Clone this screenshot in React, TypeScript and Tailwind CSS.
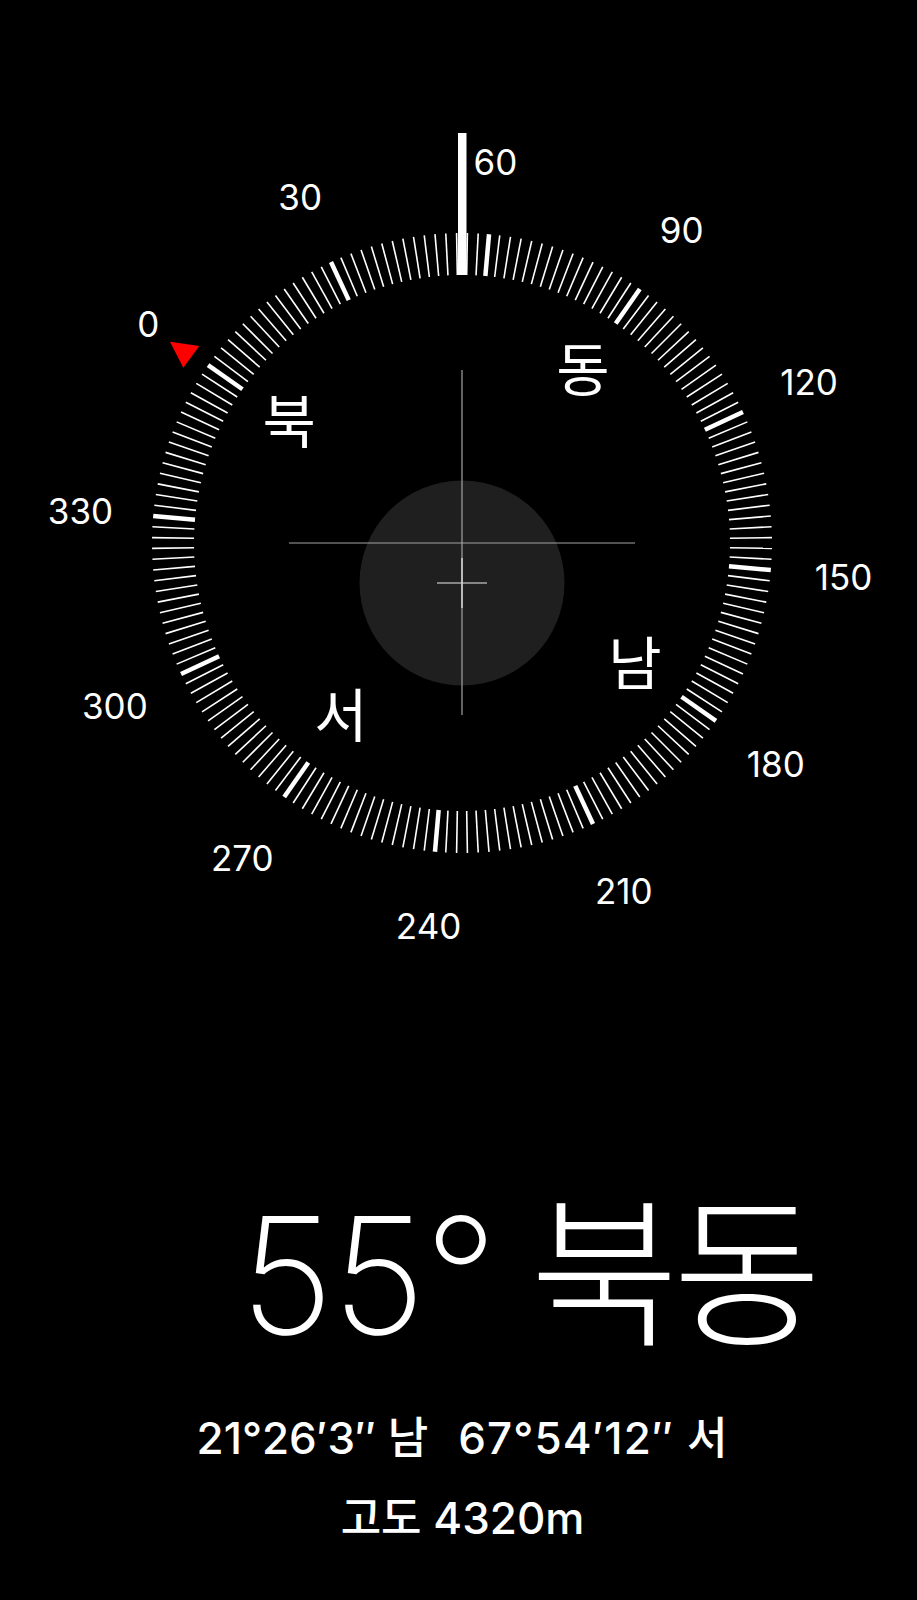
import React from 'react'

const CX = 462
const CY = 543
const HEADING = 55

// screen angle (deg, clockwise from up) -> point
const polar = (deg: number, r: number) => {
  const a = (deg * Math.PI) / 180
  return { x: CX + r * Math.sin(a), y: CY - r * Math.cos(a) }
}

const ticks = Array.from({ length: 180 }, (_, i) => i * 2)
const degreeLabels = Array.from({ length: 12 }, (_, i) => i * 30)
const cardinals: [string, number][] = [
  ['북', 0],
  ['동', 90],
  ['남', 180],
  ['서', 270],
]

function Dial() {
  return (
    <svg width={917} height={1000} viewBox="0 0 917 1000" className="block">
      {/* tick ring */}
      {ticks.map((v) => {
        const a = v - HEADING
        const p1 = polar(a, 268)
        const p2 = polar(a, 310)
        const bold = v % 30 === 0
        return (
          <line
            key={v}
            x1={p1.x}
            y1={p1.y}
            x2={p2.x}
            y2={p2.y}
            stroke="#fff"
            strokeWidth={bold ? 4.5 : 1.6}
          />
        )
      })}

      {/* heading marker */}
      <rect x={CX - 4} y={133} width={8.5} height={142} fill="#fff" />

      {/* north pointer */}
      <polygon points="170,341.7 199.3,346 183.3,367.7" fill="#ff0000" />

      {degreeLabels.map((v) => {
        const p = polar(v - HEADING, 383)
        return (
          <text key={v} x={p.x} y={p.y + 14} textAnchor="middle" fontSize={35} fill="#fff">
            {v}
          </text>
        )
      })}

      {cardinals.map(([label, v]) => {
        const p = polar(v - HEADING, 211)
        return (
          <text key={label} x={p.x} y={p.y + 21} textAnchor="middle" fontSize={58} fill="#fff">
            {label}
          </text>
        )
      })}

      {/* level bubble */}
      <circle cx={CX} cy={583} r={102.5} fill="#1f1f1f" />

      {/* crosshair */}
      <line x1={289} y1={CY} x2={635} y2={CY} stroke="#a3a3a3" strokeWidth={1.2} />
      <line x1={CX} y1={370} x2={CX} y2={715} stroke="#a3a3a3" strokeWidth={1.2} />
      <line x1={CX - 25} y1={583} x2={CX + 25} y2={583} stroke="#a8a8a8" strokeWidth={1.5} />
      <line x1={CX} y1={558} x2={CX} y2={608} stroke="#d4d4d4" strokeWidth={1.5} />
    </svg>
  )
}

export default function App() {
  return (
    <div className="w-[917px] h-[1600px] overflow-hidden bg-black text-white font-['Inter','Noto_Sans_CJK_KR',sans-serif]">
      <Dial />

      <div className="mt-[194px] pl-[240px] flex items-baseline text-[162px] leading-none font-extralight whitespace-nowrap">
        <span className="tracking-[-0.01em]">55°</span>
        <span className="ml-[34px] tracking-[-0.04em]">북동</span>
      </div>

      <div className="mt-[60px] pl-[8px] flex justify-center items-baseline text-[44px] leading-none font-medium whitespace-nowrap">
        <span>21°26′3″ 남</span>
        <span className="ml-[30px] tracking-[0.025em]">67°54′12″ 서</span>
      </div>

      <div className="mt-[36px] pl-[8px] text-center text-[44px] leading-none font-medium whitespace-nowrap">
        고도 4320m
      </div>
    </div>
  )
}
